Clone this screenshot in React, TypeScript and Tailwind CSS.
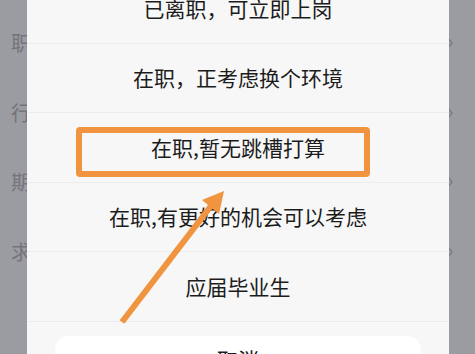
const options = [
  "已离职，可立即上岗",
  "在职，正考虑换个环境",
  "在职,暂无跳槽打算",
  "在职,有更好的机会可以考虑",
  "应届毕业生",
];

const sideLabels = ["职", "行", "期", "求"];

export default function App() {
  return (
    <div
      className="relative flex h-[354px] w-[475px] overflow-hidden bg-[#9b9ca1]"
      style={{ fontFamily: '"Noto Sans CJK SC", "Noto Sans", sans-serif' }}
    >
      {/* dimmed page, left edge */}
      <div className="flex w-[27px] shrink-0 flex-col overflow-hidden pt-[33px]">
        {sideLabels.map((c) => (
          <div key={c} className="flex h-[69.5px] items-start">
            <span className="ml-[11px] text-[20px] leading-none whitespace-nowrap text-[#74757a]">{c}</span>
          </div>
        ))}
      </div>

      {/* sheet */}
      <div className="flex flex-1 flex-col bg-[#f7f7f7]">
        <div className="-mt-[26px] flex flex-col">
          {options.map((o) => (
            <div
              key={o}
              className="flex h-[69.5px] items-center justify-center border-b border-[#ececec] text-[21px] text-[#1c1c1c]"
            >
              {o}
            </div>
          ))}
        </div>
        <div className="mx-[28px] mt-[14px] flex h-[60px] justify-center rounded-t-[14px] bg-white pt-[8px] text-[21px] text-[#1c1c1c]">
          取消
        </div>
      </div>

      {/* dimmed page, right edge */}
      <div className="flex w-[26px] shrink-0 flex-col overflow-hidden pt-[35px]">
        {sideLabels.map((c) => (
          <div key={c} className="flex h-[69.5px] items-start">
            <svg width="8" height="16" viewBox="0 0 8 16" className="-ml-[3px]">
              <path d="M1 2 L6 8 L1 14" fill="none" stroke="#7c7d82" strokeWidth="1.5" />
            </svg>
          </div>
        ))}
      </div>

      {/* annotation */}
      <div className="absolute left-[76px] top-[127px] h-[50px] w-[294px] rounded-[4px] border-[6px] border-[#f0943f]" />
      <svg className="absolute left-0 top-0" width="475" height="354" viewBox="0 0 475 354">
        <line x1="122" y1="322" x2="214" y2="202" stroke="#f0943f" strokeWidth="6" strokeLinecap="butt" />
        <polygon points="224,191 202,200 219,214" fill="#f0943f" />
      </svg>
    </div>
  );
}
